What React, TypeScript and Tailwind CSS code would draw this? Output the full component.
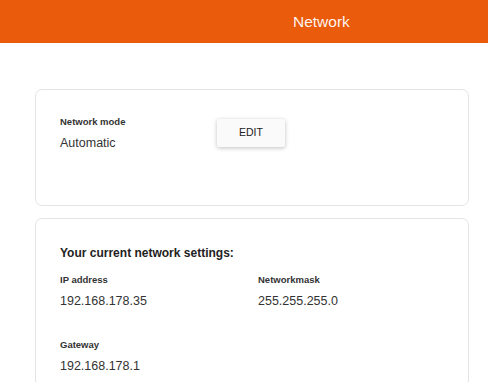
import React from 'react';

const Field = ({ label, value }: { label: string; value: string }) => (
  <div>
    <div className="text-[9.5px] leading-[12px] font-bold text-[#333]">{label}</div>
    <div className="mt-[7px] text-[12.5px] leading-[16px] text-[#333]">{value}</div>
  </div>
);

export default function App() {
  return (
    <div className="min-h-[382px] bg-white font-['Liberation_Sans',Arial,sans-serif]">
      <header className="h-[43px] bg-[#ea5b0c] flex items-center pl-[293px]">
        <span className="text-[15.5px] text-white/95">Network</span>
      </header>

      <main className="pl-[35px] pr-[19px] pt-[46px] flex flex-col gap-[12px]">
        <section className="h-[117px] rounded-[7px] border border-[#e4e4e4] pl-[24px] pt-[26px]">
          <div className="flex items-start">
            <div className="w-[157px]">
              <Field label="Network mode" value="Automatic" />
            </div>
            <button className="mt-[3px] w-[68px] h-[28px] rounded-[2px] bg-[#fafafa] text-[10.5px] text-[#222] shadow-[0_1px_4px_rgba(0,0,0,0.25)]">
              EDIT
            </button>
          </div>
        </section>

        <section className="h-[180px] rounded-[7px] border border-[#e4e4e4] pl-[24px] pt-[26px]">
          <h2 className="text-[12px] leading-[16px] font-bold text-[#222]">
            Your current network settings:
          </h2>
          <div className="mt-[13px] grid grid-cols-[198px_1fr] gap-y-[30px]">
            <Field label="IP address" value="192.168.178.35" />
            <Field label="Networkmask" value="255.255.255.0" />
            <Field label="Gateway" value="192.168.178.1" />
          </div>
        </section>
      </main>
    </div>
  );
}
